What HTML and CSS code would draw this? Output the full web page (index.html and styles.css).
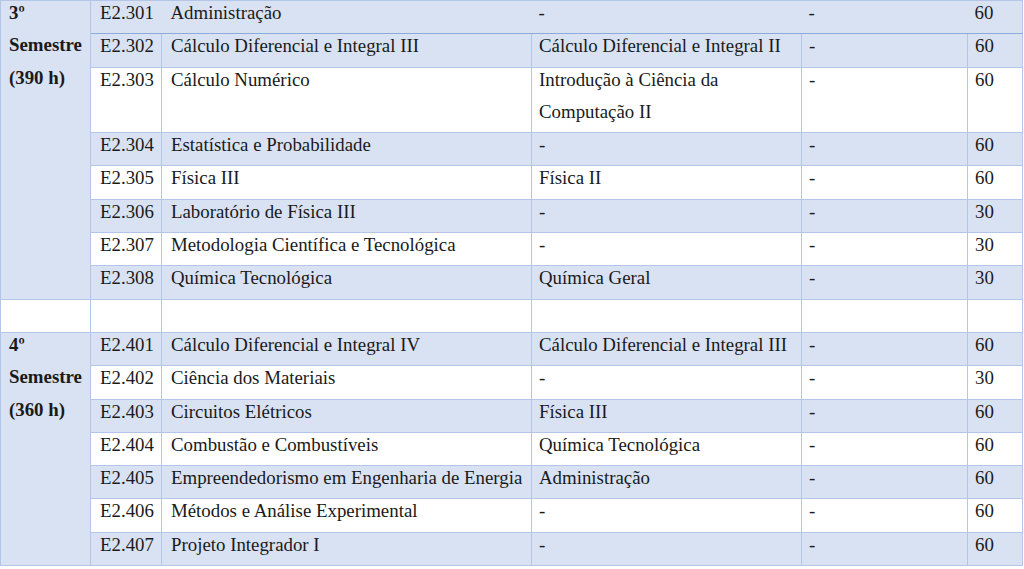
FILE: index.html
```html
<!DOCTYPE html>
<html lang="pt">
<head>
<meta charset="utf-8">
<link rel="stylesheet" href="styles.css">
</head>
<body>
<table class="grade">
  <colgroup>
    <col class="c-sem"><col class="c-code"><col class="c-name"><col class="c-pre"><col class="c-co"><col class="c-hrs">
  </colgroup>
  <tbody>
    <tr class="blue first">
      <td class="sem" rowspan="8"><div class="t">3º<br>Semestre<br>(390 h)</div></td>
      <td><div class="t">E2.301</div></td><td><div class="t">Administração</div></td><td class="nar"><div class="t">-</div></td><td class="nar"><div class="t">-</div></td><td class="nar hrs"><div class="t">60</div></td>
    </tr>
    <tr class="blue">
      <td><div class="t">E2.302</div></td><td><div class="t">Cálculo Diferencial e Integral III</div></td><td class="nar"><div class="t">Cálculo Diferencial e Integral II</div></td><td class="nar"><div class="t">-</div></td><td class="nar hrs"><div class="t">60</div></td>
    </tr>
    <tr>
      <td><div class="t">E2.303</div></td><td><div class="t">Cálculo Numérico</div></td><td class="nar"><div class="t">Introdução à Ciência da<br>Computação II</div></td><td class="nar"><div class="t">-</div></td><td class="nar hrs"><div class="t">60</div></td>
    </tr>
    <tr class="blue">
      <td><div class="t">E2.304</div></td><td><div class="t">Estatística e Probabilidade</div></td><td class="nar"><div class="t">-</div></td><td class="nar"><div class="t">-</div></td><td class="nar hrs"><div class="t">60</div></td>
    </tr>
    <tr>
      <td><div class="t">E2.305</div></td><td><div class="t">Física III</div></td><td class="nar"><div class="t">Física II</div></td><td class="nar"><div class="t">-</div></td><td class="nar hrs"><div class="t">60</div></td>
    </tr>
    <tr class="blue">
      <td><div class="t">E2.306</div></td><td><div class="t">Laboratório de Física III</div></td><td class="nar"><div class="t">-</div></td><td class="nar"><div class="t">-</div></td><td class="nar hrs"><div class="t">30</div></td>
    </tr>
    <tr>
      <td><div class="t">E2.307</div></td><td><div class="t">Metodologia Científica e Tecnológica</div></td><td class="nar"><div class="t">-</div></td><td class="nar"><div class="t">-</div></td><td class="nar hrs"><div class="t">30</div></td>
    </tr>
    <tr class="blue">
      <td><div class="t">E2.308</div></td><td><div class="t">Química Tecnológica</div></td><td class="nar"><div class="t">Química Geral</div></td><td class="nar"><div class="t">-</div></td><td class="nar hrs"><div class="t">30</div></td>
    </tr>
    <tr class="empty">
      <td><div class="t">&nbsp;</div></td><td></td><td></td><td></td><td></td><td></td>
    </tr>
    <tr class="blue">
      <td class="sem" rowspan="7"><div class="t">4º<br>Semestre<br>(360 h)</div></td>
      <td><div class="t">E2.401</div></td><td><div class="t">Cálculo Diferencial e Integral IV</div></td><td class="nar"><div class="t">Cálculo Diferencial e Integral III</div></td><td class="nar"><div class="t">-</div></td><td class="nar hrs"><div class="t">60</div></td>
    </tr>
    <tr>
      <td><div class="t">E2.402</div></td><td><div class="t">Ciência dos Materiais</div></td><td class="nar"><div class="t">-</div></td><td class="nar"><div class="t">-</div></td><td class="nar hrs"><div class="t">30</div></td>
    </tr>
    <tr class="blue">
      <td><div class="t">E2.403</div></td><td><div class="t">Circuitos Elétricos</div></td><td class="nar"><div class="t">Física III</div></td><td class="nar"><div class="t">-</div></td><td class="nar hrs"><div class="t">60</div></td>
    </tr>
    <tr>
      <td><div class="t">E2.404</div></td><td><div class="t">Combustão e Combustíveis</div></td><td class="nar"><div class="t">Química Tecnológica</div></td><td class="nar"><div class="t">-</div></td><td class="nar hrs"><div class="t">60</div></td>
    </tr>
    <tr class="blue">
      <td><div class="t">E2.405</div></td><td><div class="t">Empreendedorismo em Engenharia de Energia</div></td><td class="nar"><div class="t">Administração</div></td><td class="nar"><div class="t">-</div></td><td class="nar hrs"><div class="t">60</div></td>
    </tr>
    <tr>
      <td><div class="t">E2.406</div></td><td><div class="t">Métodos e Análise Experimental</div></td><td class="nar"><div class="t">-</div></td><td class="nar"><div class="t">-</div></td><td class="nar hrs"><div class="t">60</div></td>
    </tr>
    <tr class="blue">
      <td><div class="t">E2.407</div></td><td><div class="t">Projeto Integrador I</div></td><td class="nar"><div class="t">-</div></td><td class="nar"><div class="t">-</div></td><td class="nar hrs"><div class="t">60</div></td>
    </tr>
  </tbody>
</table>
</body>
</html>
```

FILE: styles.css
```css
html, body {
  margin: 0;
  padding: 0;
  background: #ffffff;
}

body {
  font-family: "Liberation Serif", "Times New Roman", serif;
  font-size: 18.85px;
  color: #1a1a1a;
}

.grade {
  border-collapse: collapse;
  table-layout: fixed;
  width: 1022px;
}

.c-sem { width: 90px; }
.c-code { width: 71px; }
.c-name { width: 370px; }
.c-pre { width: 270px; }
.c-co { width: 166px; }
.c-hrs { width: 55px; }

.grade td {
  border: 1px solid #b4c6e7;
  padding: 0 4px 0 9px;
  vertical-align: top;
  white-space: nowrap;
  overflow: hidden;
}

.grade td.nar {
  padding-left: 7px;
}

.grade .t {
  line-height: 32.3px;
  margin: -4px 0 4px;
}

.grade tr.blue td,
.grade td.sem {
  background: #d9e2f3;
}

.grade td.sem {
  font-weight: bold;
  padding-left: 8px;
}

.grade tr.first td {
  border-left: none;
  border-right: none;
  border-bottom-color: #8eaadb;
}

.grade tr.first td.sem {
  border-left: 1px solid #b4c6e7;
  border-right: 1px solid #b4c6e7;
  border-bottom-color: #b4c6e7;
}

.grade tr.first td.hrs {
  border-right: 1px solid #b4c6e7;
}

.grade tr.empty td {
  background: #ffffff;
}
```
